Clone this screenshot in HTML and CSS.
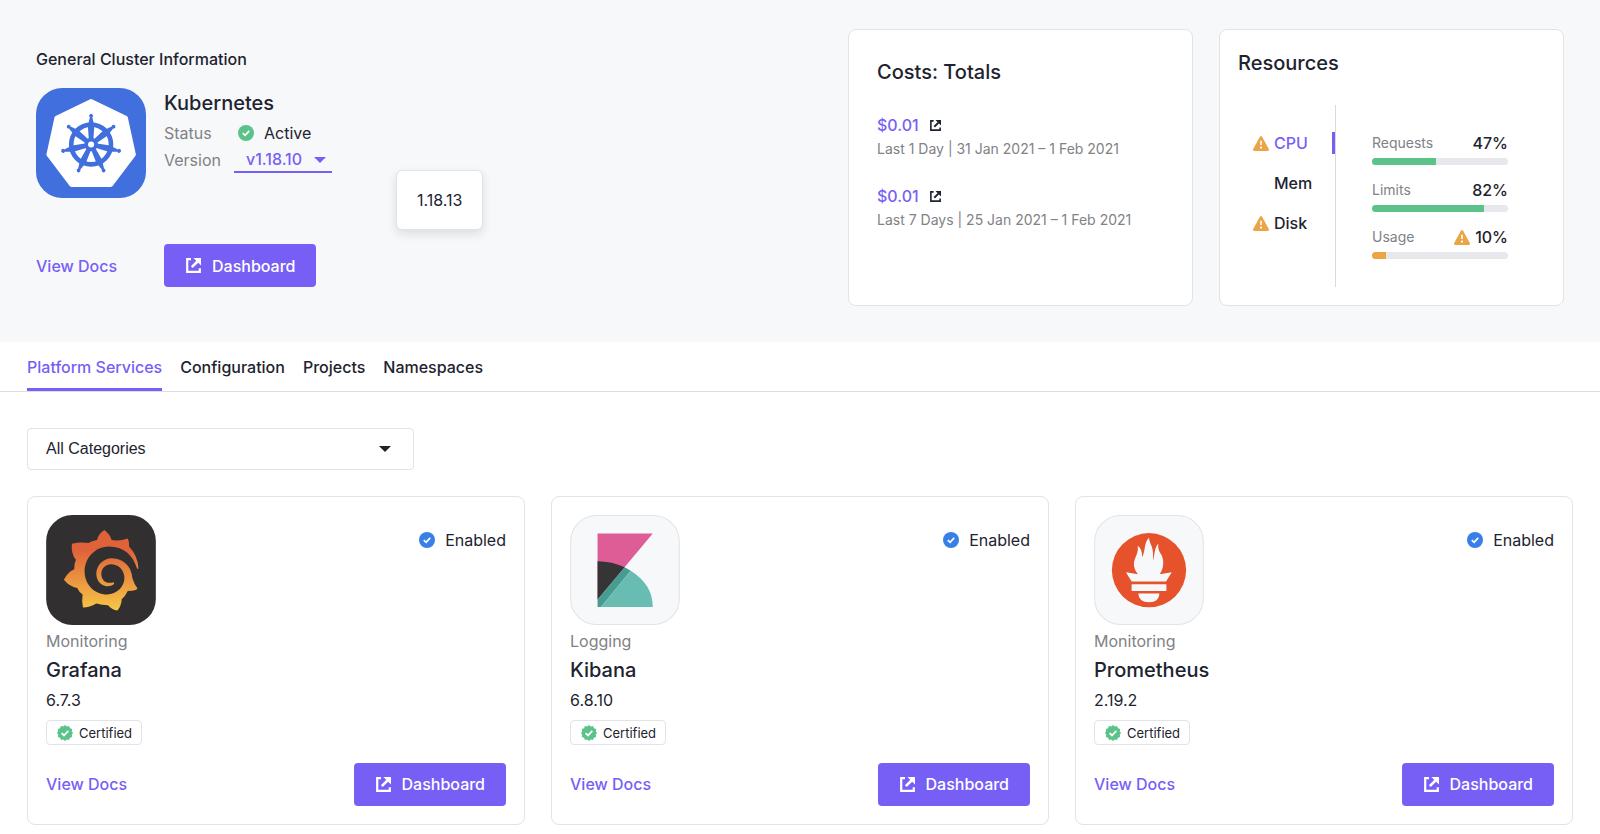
FILE: index.html
```html
<!DOCTYPE html>
<html lang="en">
<head>
<meta charset="utf-8">
<meta name="viewport" content="width=device-width, initial-scale=1">
<title>Kubernetes cluster</title>
<link rel="stylesheet" href="styles.css">
</head>
<body>
<svg class="sprite" aria-hidden="true">
  <symbol id="open" viewBox="0 0 15 15"><path d="M5 1.2H1.2V13.8H13.8V10.2" fill="none" stroke="currentColor" stroke-width="2.2"/><path d="M5.8 9.2L11.5 3.5" fill="none" stroke="currentColor" stroke-width="2.6"/><path d="M7.4 0H15V7.6Z" fill="currentColor"/></symbol>
  <symbol id="check" viewBox="0 0 16 16"><circle cx="8" cy="8" r="8" fill="currentColor"/><path d="M4.8 8.2L7.1 10.4L11.2 5.9" fill="none" stroke="#fff" stroke-width="1.7"/></symbol>
  <symbol id="seal" viewBox="0 0 16 16"><path d="M8 0L9.8 1.6L12.1 1.1L12.9 3.2L15.2 4L14.8 6.3L16 8L14.8 9.8L15.1 12.1L12.9 12.8L12 15L9.8 14.5L8 16L6.2 14.5L4 15L3.1 12.8L.9 12.1L1.2 9.8L0 8L1.2 6.3L.8 4L3.1 3.2L3.9 1.1L6.2 1.6Z" fill="currentColor"/><path d="M4.6 8.2L7 10.5L11.3 5.8" fill="none" stroke="#fff" stroke-width="1.8"/></symbol>
  <symbol id="warn" viewBox="0 0 16 15"><path d="M6.9.7Q8-.6 9.1.7L15.8 13Q16.2 14.9 14.6 15H1.4Q-.2 14.9.2 13Z" fill="currentColor"/><path d="M8 4.8V9" stroke="#fff" stroke-width="1.7"/><circle cx="8" cy="11.6" r="1.1" fill="#fff"/></symbol>
  <symbol id="caret" viewBox="0 0 12 6"><path d="M0 0H12L6 6Z" fill="currentColor"/></symbol>
</svg>

<header class="cluster">
  <section class="general">
    <h2 class="eyebrow">General Cluster Information</h2>
    <div class="summary">
      <svg class="logo" viewBox="0 0 109 109" role="img" aria-label="Kubernetes">
        <rect width="109" height="109" rx="26" fill="#416fdd"/>
        <path d="M54.6 13L89 29.5L97 66L74.3 96H35L12.3 66L20.3 29.5Z" fill="#fff" stroke="#fff" stroke-width="4" stroke-linejoin="round"/>
        <g transform="translate(54.6 56)" fill="#416fdd">
          <circle r="19.7" fill="none" stroke="#416fdd" stroke-width="4.6"/>
          <circle r="6.6"/>
          <g id="spoke"><path d="M-3.2-18.5L-1.2-27A1.9 1.9 0 1 1 1.2-27L3.2-18.5L2.2-4H-2.2Z"/></g>
          <use href="#spoke" transform="rotate(51.43)"/><use href="#spoke" transform="rotate(102.86)"/><use href="#spoke" transform="rotate(154.29)"/><use href="#spoke" transform="rotate(205.71)"/><use href="#spoke" transform="rotate(257.14)"/><use href="#spoke" transform="rotate(308.57)"/>
          <circle r="3" fill="#fff"/>
        </g>
      </svg>
      <div class="facts">
        <h1 class="title">Kubernetes</h1>
        <div class="fact"><span class="muted">Status</span><span class="state"><svg class="icon green"><use href="#check"/></svg>Active</span></div>
        <div class="fact"><label class="muted" for="version">Version</label>
          <span class="version"><select id="version"><option>v1.18.10</option><option>1.18.13</option></select><svg class="caret"><use href="#caret"/></svg></span>
        </div>
        <div class="menu"><button type="button">1.18.13</button></div>
      </div>
      <a class="link" href="#docs">View Docs</a>
      <button class="primary" type="button"><svg class="open"><use href="#open"/></svg>Dashboard</button>
    </div>
  </section>

  <section class="panel costs">
    <h2 class="title">Costs: Totals</h2>
    <div class="cost"><a href="#day">$0.01 <svg><use href="#open"/></svg></a><p>Last 1 Day | 31 Jan 2021 – 1 Feb 2021</p></div>
    <div class="cost"><a href="#week">$0.01 <svg><use href="#open"/></svg></a><p>Last 7 Days | 25 Jan 2021 – 1 Feb 2021</p></div>
  </section>

  <section class="panel resources">
    <h2 class="title">Resources</h2>
    <div class="usage">
      <div class="kinds">
        <button class="kind active" type="button"><svg class="warn"><use href="#warn"/></svg>CPU</button>
        <button class="kind" type="button">Mem</button>
        <button class="kind" type="button"><svg class="warn"><use href="#warn"/></svg>Disk</button>
      </div>
      <div class="meters">
        <div class="meter"><span class="name">Requests</span><span class="value">47%</span><div class="track"><div class="fill" style="width:47%"></div></div></div>
        <div class="meter"><span class="name">Limits</span><span class="value">82%</span><div class="track"><div class="fill" style="width:82%"></div></div></div>
        <div class="meter low"><span class="name">Usage</span><span class="value"><svg class="warn"><use href="#warn"/></svg>10%</span><div class="track"><div class="fill" style="width:10%"></div></div></div>
      </div>
    </div>
  </section>
</header>

<nav class="tabs">
  <a class="tab current" href="#services">Platform Services</a>
  <a class="tab" href="#configuration">Configuration</a>
  <a class="tab" href="#projects">Projects</a>
  <a class="tab" href="#namespaces">Namespaces</a>
</nav>

<main class="services">
  <div class="filter"><select aria-label="Category"><option>All Categories</option></select><svg class="caret"><use href="#caret"/></svg></div>
  <div class="cards">
    <article class="card">
      <div class="top">
        <svg class="logo" viewBox="78 75 328 329" role="img" aria-label="Grafana">
          <defs><linearGradient id="flare" x1="0" y1="0" x2="0" y2="1"><stop offset=".25" stop-color="#e0623a"/><stop offset="1" stop-color="#f6c846"/></linearGradient></defs>
          <rect x="78" y="75" width="328" height="329" rx="78" fill="#322f30"/>
          <path fill="url(#flare)" d="M252 120Q268 132 274 150Q298 154 322 145Q327 154 326 169Q353 198 354 236H350C338 195 310 169 265 169C222 170 193 205 193 244C193 283 223 313 260 313C290 312 313 288 312 262C311 237 293 222 272 222C253 223 242 237 243 253C244 270 257 283 280 276Q282 279 281 281C274 287 263 289 255 287C238 283 228 268 228 250C228 225 249 204 275 204C308 205 333 226 336 264Q341 281 351 294Q349 302 322 302Q315 317 304 327Q303 347 291 361Q274 358 263 345Q246 345 228 340Q208 352 188 352Q184 331 187 313Q176 305 171 293Q148 290 131 269Q141 246 162 237Q161 222 167 209Q152 191 155 161Q180 155 204 159Q215 153 230 150Q235 130 252 120Z"/>
        </svg>
        <span class="state"><svg class="icon blue"><use href="#check"/></svg>Enabled</span>
      </div>
      <p class="muted">Monitoring</p>
      <h2 class="title">Grafana</h2>
      <p class="release">6.7.3</p>
      <span class="badge"><svg class="green"><use href="#seal"/></svg>Certified</span>
      <div class="actions"><a class="link" href="#grafana">View Docs</a><button class="primary" type="button"><svg class="open"><use href="#open"/></svg>Dashboard</button></div>
    </article>
    <article class="card">
      <div class="top">
        <svg class="logo" viewBox="91 75 328 329" role="img" aria-label="Kibana">
          <rect x="92.5" y="76.5" width="325" height="326" rx="77" fill="#f7f8fa" stroke="#e2e3e6" stroke-width="3"/>
          <path d="M173 130H338L173 328Z" fill="#de5d96"/>
          <path d="M173 213Q216 213 254 231L173 328Z" fill="#353535"/>
          <path d="M254 231L272 242L183 350H173V328Z" fill="#479c92"/>
          <path d="M272 242Q338 283 338 350H183Z" fill="#68bcb1"/>
        </svg>
        <span class="state"><svg class="icon blue"><use href="#check"/></svg>Enabled</span>
      </div>
      <p class="muted">Logging</p>
      <h2 class="title">Kibana</h2>
      <p class="release">6.8.10</p>
      <span class="badge"><svg class="green"><use href="#seal"/></svg>Certified</span>
      <div class="actions"><a class="link" href="#kibana">View Docs</a><button class="primary" type="button"><svg class="open"><use href="#open"/></svg>Dashboard</button></div>
    </article>
    <article class="card">
      <div class="top">
        <svg class="logo" viewBox="72 75 328 329" role="img" aria-label="Prometheus">
          <rect x="73.5" y="76.5" width="325" height="326" rx="77" fill="#f7f8fa" stroke="#e2e3e6" stroke-width="3"/>
          <circle cx="236" cy="240" r="111" fill="#e6522c"/>
          <g fill="#f7f8fa">
            <path d="M184 274L167 246L203 252C190 237 189 221 193 209C198 195 205 184 202 167C213 174 216 188 215 201C226 186 220 156 236 143C237 160 246 164 248 188L248 212C253 196 252 171 264 161C262 177 267 184 273 194C282 211 280 237 268 252L304 246L287 274Z"/>
            <path d="M184 282H288V302H184Z"/>
            <path d="M204 310H267Q267 336 236 336Q205 336 204 310Z"/>
          </g>
        </svg>
        <span class="state"><svg class="icon blue"><use href="#check"/></svg>Enabled</span>
      </div>
      <p class="muted">Monitoring</p>
      <h2 class="title">Prometheus</h2>
      <p class="release">2.19.2</p>
      <span class="badge"><svg class="green"><use href="#seal"/></svg>Certified</span>
      <div class="actions"><a class="link" href="#prometheus">View Docs</a><button class="primary" type="button"><svg class="open"><use href="#open"/></svg>Dashboard</button></div>
    </article>
  </div>
</main>
</body>
</html>
```
FILE: styles.css
```css
* { box-sizing: border-box; }

body {
  margin: 0;
  background: #fff;
  color: #1d232f;
  font-family: Inter, "Liberation Sans", sans-serif;
  font-size: 16px;
  line-height: 24px;
}

h1, h2, p { margin: 0; }
a { text-decoration: none; }
button, select { font: inherit; color: inherit; cursor: pointer; }
svg { display: block; flex: none; }
.sprite { position: absolute; width: 0; height: 0; }

.title { font-size: 20px; font-weight: 500; line-height: 24px; }
.muted { color: #808286; }
.green { color: #5bc389; }
.blue { color: #3880e8; }
.icon { width: 16px; height: 16px; }
.logo { width: 110px; height: 110px; }
.link { color: #775ff5; font-weight: 500; }
.state { display: flex; align-items: center; gap: 10px; }

.primary {
  display: inline-flex;
  align-items: center;
  gap: 11px;
  height: 43px;
  padding: 0 21px 0 22px;
  border: 0;
  border-radius: 4px;
  background: #775ff5;
  color: #fff;
  font-weight: 500;
}
.open { width: 15px; height: 15px; }

.cluster {
  display: flex;
  gap: 26px;
  padding: 29px 36px 36px;
  background: #f7f8fa;
}
.general { flex: 1; padding-top: 18px; }
.eyebrow { font-size: 16px; font-weight: 500; line-height: 24px; }
.summary {
  display: grid;
  grid-template-columns: 110px max-content;
  column-gap: 18px;
  row-gap: 46px;
  align-items: center;
  justify-items: start;
  margin-top: 17px;
}
.facts { position: relative; align-self: start; padding-top: 3px; }
.fact {
  display: grid;
  grid-template-columns: 70px auto;
  align-items: center;
  height: 27px;
}
.fact:nth-child(2) { margin-top: 4px; }
.fact .state { padding-left: 4px; }
.version { position: relative; width: 98px; border-bottom: 2px solid #775ff5; color: #775ff5; }
.version select {
  display: block;
  width: 100%;
  height: 24px;
  padding: 0 0 0 12px;
  border: 0;
  background: none;
  font-weight: 500;
  line-height: 24px;
  appearance: none;
}
.caret { position: absolute; width: 12px; height: 6px; pointer-events: none; }
.version .caret { top: 10px; right: 6px; }
.menu {
  position: absolute;
  top: 82px;
  left: 232px;
  padding: 16px 0;
  border: 1px solid #e2e3e8;
  border-radius: 6px;
  background: #fff;
  box-shadow: 0 4px 10px rgba(30, 35, 50, .12);
}
.menu button { display: block; height: 26px; padding: 0 20px; border: 0; background: none; }

.panel {
  flex: 0 1 345px;
  border: 1px solid #e2e3e6;
  border-radius: 8px;
  background: #fff;
}
.costs { padding: 30px 28px; }
.costs .title { margin-bottom: 29px; }
.cost { margin-bottom: 24px; }
.cost a { display: flex; align-items: center; gap: 11px; color: #775ff5; font-weight: 500; }
.cost svg { width: 11px; height: 11px; color: #1d232f; }
.cost p { color: #808286; font-size: 14px; line-height: 23px; }

.resources { padding: 21px 18px 18px; }
.usage { display: flex; margin-top: 30px; }
.kinds {
  display: flex;
  flex-direction: column;
  gap: 18px;
  width: 98px;
  padding: 27px 0 53px;
  border-right: 1px solid #d9dade;
}
.kind {
  display: flex;
  align-items: center;
  gap: 5px;
  height: 22px;
  padding: 0 0 0 36px;
  border: 0;
  border-right: 3px solid transparent;
  background: none;
  font-weight: 500;
}
.kind .warn { margin-left: -21px; }
.active { border-right-color: #775ff5; color: #775ff5; }
.warn { width: 16px; height: 15px; color: #eba446; }
.meters { flex: 1; padding: 27px 37px 0 36px; }
.meter { display: grid; grid-template-columns: 1fr auto; row-gap: 4px; margin-bottom: 14px; }
.name { color: #808286; font-size: 14px; line-height: 22px; }
.value { display: flex; align-items: center; gap: 5px; font-weight: 500; line-height: 22px; }
.track { grid-column: 1 / 3; height: 7px; border-radius: 4px; background: #e7e8ec; overflow: hidden; }
.fill { height: 100%; background: #5bc389; }
.low .fill { background: #eba446; }

.tabs { display: flex; gap: 18px; padding: 0 27px; border-bottom: 1px solid #dddee2; }
.tab { padding: 13px 0 9px; border-bottom: 3px solid transparent; color: inherit; font-weight: 500; }
.current { border-color: #775ff5; color: #775ff5; }

.services { padding: 36px 27px 10px; }
.filter { position: relative; width: 387px; margin-bottom: 26px; }
.filter select {
  display: block;
  width: 100%;
  height: 42px;
  padding: 0 18px;
  border: 1px solid #e2e3e8;
  border-radius: 4px;
  background: #fff;
  font-family: "Liberation Sans", sans-serif;
  appearance: none;
}
.filter .caret { top: 18px; right: 23px; }

.cards { display: grid; grid-template-columns: repeat(3, 1fr); gap: 26px; }
.card { padding: 18px; border: 1px solid #e2e3e8; border-radius: 8px; }
.top { display: flex; justify-content: space-between; align-items: flex-start; margin-bottom: 4px; }
.top .state { margin-top: 13px; }
.card .title { margin: 5px 0 6px; }
.release { margin-bottom: 8px; }
.badge {
  display: inline-flex;
  align-items: center;
  gap: 6px;
  height: 25px;
  padding: 0 9px 0 10px;
  border: 1px solid #e2e3e8;
  border-radius: 4px;
  font-size: 13px;
}
.badge svg { width: 16px; height: 16px; }
.actions { display: flex; align-items: center; justify-content: space-between; margin-top: 16px; }
```
